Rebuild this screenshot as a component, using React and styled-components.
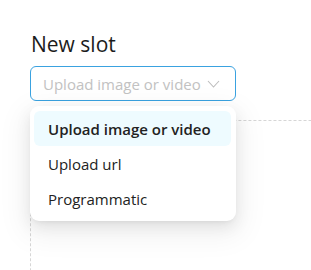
import React from 'react';
import styled, { createGlobalStyle } from 'styled-components';

const Global = createGlobalStyle`
  body {
    margin: 0;
    background: #fff;
    font-family: "Open Sans", "Noto Sans", sans-serif;
    color: #222;
  }
`;

const options = ['Upload image or video', 'Upload url', 'Programmatic'];

function App() {
  return (
    <Page>
      <Global />
      <Title>New slot</Title>
      <Field>
        <Select>
          <Placeholder>Upload image or video</Placeholder>
          <svg width="13" height="8" viewBox="0 0 13 8">
            <path d="M1 1 L6.5 7 L12 1" fill="none" stroke="#bdbdbd" strokeWidth="1.1" />
          </svg>
        </Select>
        <Menu>
          {options.map((o, i) => (
            <Item key={o} active={i === 0}>{o}</Item>
          ))}
        </Menu>
      </Field>
      <DropZone />
    </Page>
  );
}

export default App;

const Page = styled.div`
  padding: 30px 0 0 30px;
  height: 270px;
  box-sizing: border-box;
  overflow: hidden;
`;

const Title = styled.div`
  font-size: 21px;
  line-height: 28px;
  color: #1c1c1c;
  padding-left: 1px;
  margin-bottom: 8px;
`;

const Field = styled.div`
  position: relative;
  width: 206px;
`;

const Select = styled.div`
  height: 35px;
  box-sizing: border-box;
  border: 1px solid #3aa2e0;
  border-radius: 6px;
  display: flex;
  align-items: center;
  justify-content: space-between;
  padding: 0 15px 0 12px;
`;

const Placeholder = styled.span`
  font-size: 15px;
  color: #c2c2c2;
`;

const Menu = styled.div`
  position: absolute;
  top: 40px;
  left: 0;
  right: 0;
  z-index: 2;
  background: #fff;
  border-radius: 9px;
  padding: 5px 5px 5px 4px;
  box-shadow: 0 6px 16px rgba(0, 0, 0, 0.08), 0 3px 6px -4px rgba(0, 0, 0, 0.12), 0 9px 28px 8px rgba(0, 0, 0, 0.05);
`;

const Item = styled.div`
  height: 35px;
  display: flex;
  align-items: center;
  padding-left: 14px;
  border-radius: 6px;
  font-size: 15px;
  font-weight: ${(p) => (p.active ? 600 : 400)};
  background: ${(p) => (p.active ? '#eefbff' : 'transparent')};
  color: #222;
`;

const DropZone = styled.div`
  margin-top: 19px;
  height: 200px;
  margin-right: -20px;
  border: 1px dashed #d6d6d6;
  border-radius: 8px 0 0 0;
  background: #fff;
`;
